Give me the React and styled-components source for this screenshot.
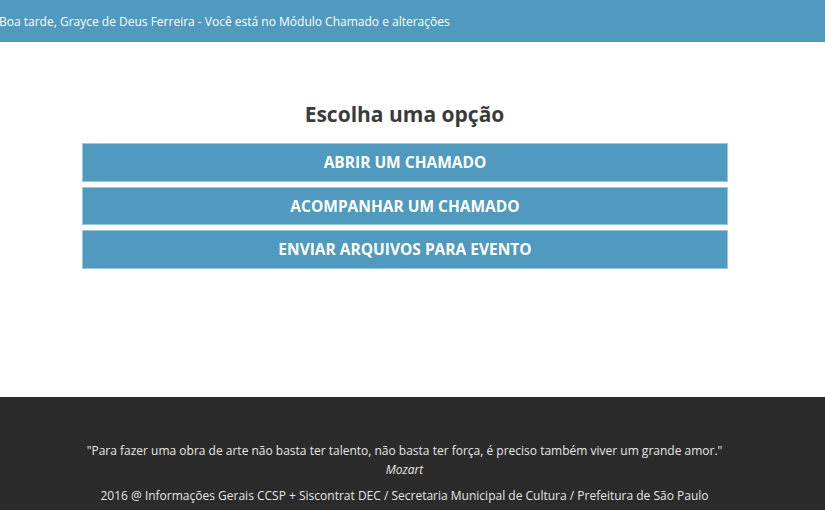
import React from 'react';
import styled, { createGlobalStyle } from 'styled-components';

const GlobalStyle = createGlobalStyle`
  html, body {
    margin: 0;
    padding: 0;
    background: #fff;
    font-family: "Open Sans", "Liberation Sans", sans-serif;
  }
`;

const Page = styled.div`
  display: flex;
  flex-direction: column;
  min-height: 510px;
`;

const TopBar = styled.header`
  height: 42px;
  background-color: #4f9abe;
  color: #fff;
  font-size: 12px;
  display: flex;
  align-items: center;
  margin-left: -1px;
`;

const Main = styled.main`
  height: 355px;
  display: flex;
  flex-direction: column;
  align-items: center;
  padding: 57px 16px 0 0;
  box-sizing: border-box;
`;

const Title = styled.h2`
  margin: 0 0 14px;
  font-size: 21px;
  font-weight: 700;
  color: #3b3b3b;
  line-height: 30px;
`;

const Options = styled.div`
  width: 646px;
  display: flex;
  flex-direction: column;
  gap: 5px;
  margin-left: 1px;
`;

const OptionButton = styled.button`
  height: 38.5px;
  border: 1px solid #9cc6dc;
  background-color: #4f9abe;
  color: #fff;
  font-family: "Open Sans", "Liberation Sans", sans-serif;
  font-weight: 700;
  font-size: 15.5px;
  text-transform: uppercase;
  cursor: pointer;
  padding: 0;
`;

const Footer = styled.footer`
  flex: 1;
  background-color: #2b2b2b;
  color: #e6e6e6;
  font-size: 12px;
  text-align: center;
  padding: 44px 16px 0 0;
`;

const Quote = styled.p`
  margin: 0;
  line-height: 19px;
`;

const Author = styled.em`
  display: block;
  line-height: 19px;
`;

const Copyright = styled.p`
  margin: 7px 0 0;
  line-height: 19px;
`;

const options = ['Abrir um chamado', 'Acompanhar um chamado', 'Enviar arquivos para evento'];

const App = () => (
  <Page>
    <GlobalStyle />
    <TopBar>Boa tarde, Grayce de Deus Ferreira - Você está no Módulo Chamado e alterações</TopBar>
    <Main>
      <Title>Escolha uma opção</Title>
      <Options>
        {options.map((o) => (
          <OptionButton key={o}>{o}</OptionButton>
        ))}
      </Options>
    </Main>
    <Footer>
      <Quote>"Para fazer uma obra de arte não basta ter talento, não basta ter força, é preciso também viver um grande amor."</Quote>
      <Author>Mozart</Author>
      <Copyright>2016 @ Informações Gerais CCSP + Siscontrat DEC / Secretaria Municipal de Cultura / Prefeitura de São Paulo</Copyright>
    </Footer>
  </Page>
);

export default App;
